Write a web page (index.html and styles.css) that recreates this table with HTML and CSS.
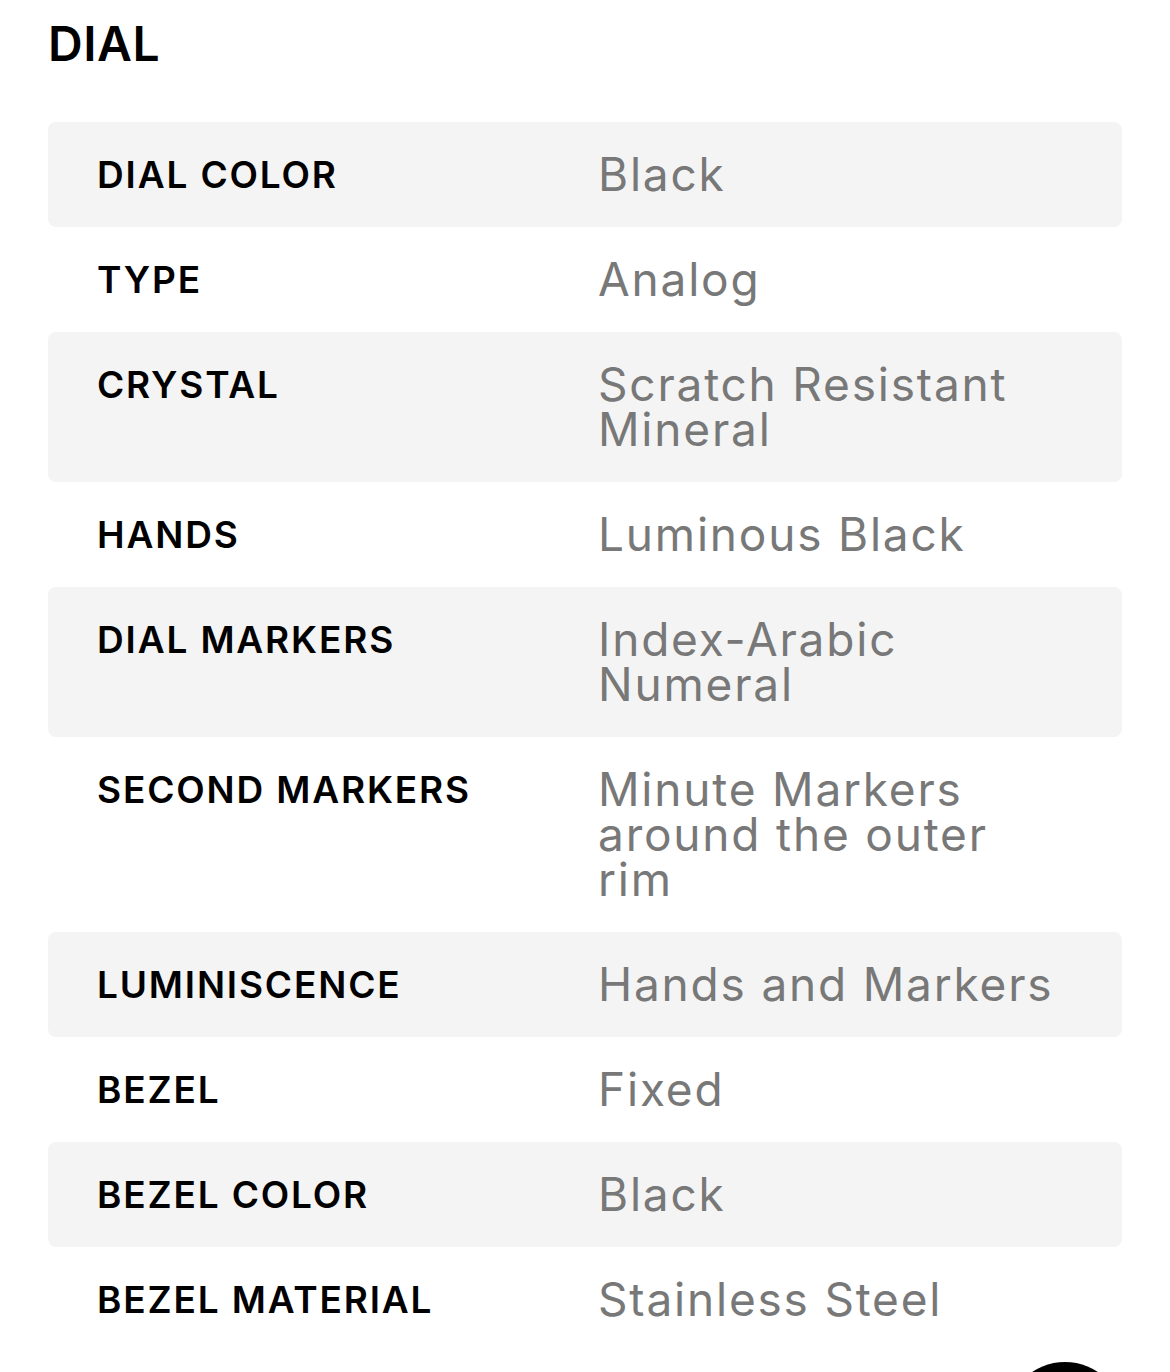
FILE: index.html
```html
<!DOCTYPE html>
<html lang="en">
<head>
<meta charset="utf-8">
<title>Dial</title>
<link rel="stylesheet" href="styles.css">
</head>
<body>
<main class="page">
  <h2 class="section-title">DIAL</h2>
  <dl class="spec-table">
    <div class="spec-row shaded"><dt class="spec-label">DIAL COLOR</dt><dd class="spec-value">Black</dd></div>
    <div class="spec-row"><dt class="spec-label">TYPE</dt><dd class="spec-value">Analog</dd></div>
    <div class="spec-row shaded"><dt class="spec-label">CRYSTAL</dt><dd class="spec-value">Scratch Resistant Mineral</dd></div>
    <div class="spec-row"><dt class="spec-label">HANDS</dt><dd class="spec-value">Luminous Black</dd></div>
    <div class="spec-row shaded"><dt class="spec-label">DIAL MARKERS</dt><dd class="spec-value">Index-Arabic Numeral</dd></div>
    <div class="spec-row"><dt class="spec-label">SECOND MARKERS</dt><dd class="spec-value">Minute Markers around the outer rim</dd></div>
    <div class="spec-row shaded"><dt class="spec-label">LUMINISCENCE</dt><dd class="spec-value">Hands and Markers</dd></div>
    <div class="spec-row"><dt class="spec-label">BEZEL</dt><dd class="spec-value">Fixed</dd></div>
    <div class="spec-row shaded"><dt class="spec-label">BEZEL COLOR</dt><dd class="spec-value">Black</dd></div>
    <div class="spec-row"><dt class="spec-label">BEZEL MATERIAL</dt><dd class="spec-value">Stainless Steel</dd></div>
  </dl>
</main>
<div class="fab" aria-hidden="true"></div>
</body>
</html>
```

FILE: styles.css
```css
html, body {
  margin: 0;
  padding: 0;
}
body {
  background: #ffffff;
  font-family: Inter, "Noto Sans", "Liberation Sans", sans-serif;
  color: #000;
  overflow: hidden;
  height: 1372px;
  position: relative;
}
.page {
  padding: 14px 48px 0 48px;
}
.section-title {
  margin: 0 0 48px 0;
  font-size: 48px;
  line-height: 60px;
  font-weight: 600;
  letter-spacing: 0.5px;
}
.spec-table {
  margin: 0;
  display: flex;
  flex-direction: column;
}
.spec-row {
  display: grid;
  grid-template-columns: 501px 1fr;
  padding: 30px 64px 30px 49px;
  border-radius: 8px;
}
.spec-row.shaded {
  background: #f4f4f4;
}
.spec-label {
  margin: 0;
  font-size: 37px;
  line-height: 45px;
  font-weight: 600;
  letter-spacing: 1.85px;
}
.spec-value {
  margin: 0;
  font-size: 46px;
  line-height: 45px;
  font-weight: 400;
  color: #787878;
  letter-spacing: 1.8px;
}
.fab {
  position: absolute;
  left: 1006px;
  top: 1362px;
  width: 118px;
  height: 118px;
  border-radius: 50%;
  background: #000;
}
```
